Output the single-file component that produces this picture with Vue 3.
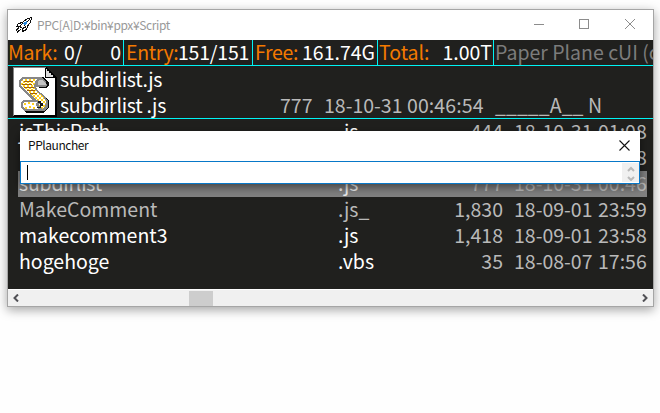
<script setup>
const status = [
  { label: 'Mark:', values: ['0/', '0'], cls: 'mark' },
  { label: 'Entry:', values: ['151/151'], cls: 'entry' },
  { label: 'Free:', values: ['161.74G'], cls: 'free' },
  { label: 'Total:', values: ['1.00T'], cls: 'total' },
]
const files = [
  { name: 'jsThisPath', ext: '.js', size: '444', date: '18-10-31', time: '01:08', cls: 'narrow' },
  { name: '', ext: '', size: '', date: '', time: '00:58', cls: '' },
  { name: 'subdirlist', ext: '.js', size: '777', date: '18-10-31', time: '00:46', cls: 'selected narrow' },
  { name: 'MakeComment', ext: '.js_', size: '1,830', date: '18-09-01', time: '23:59', cls: 'dim' },
  { name: 'makecomment3', ext: '.js', size: '1,418', date: '18-09-01', time: '23:58', cls: '' },
  { name: 'hogehoge', ext: '.vbs', size: '35', date: '18-08-07', time: '17:56', cls: '' },
]
</script>

<template>
  <div class="desktop">
    <main class="window">
      <header class="titlebar">
        <svg class="rocket" width="18" height="18" viewBox="0 0 18 18">
          <path d="M16.5 1.5L11 3.5L7.5 6.5L3.5 7.5L1.5 10.5H5.5L7.5 12.5V15.5L11.5 13.5L12.5 10L15.5 6.5Z" fill="#fff" stroke="#0a0a0a" stroke-width="1" shape-rendering="crispEdges" />
          <path d="M15 3L9 9.5M4 11.5L1 14.5M6 13L2 16.5M7.500 7L5 10.500L7.500 12.500L11.500 10.500" fill="none" stroke="#111" stroke-width="1" shape-rendering="crispEdges" />
          <path d="M9 6h2v-1h1v3h-1v1H9V8H8V7h1z" fill="#2787d8" />
        </svg>
        <span class="caption">PPC[A]D:¥bin¥ppx¥Script</span>
        <svg class="controls" width="102" height="12" viewBox="0 0 102 12" shape-rendering="crispEdges" fill="none" stroke="#8c8c8c">
          <path d="M0 5.5H10" />
          <rect x="45.5" y="0.5" width="9" height="9" />
          <path d="M91 0L101 10M101 0L91 10" shape-rendering="auto" />
        </svg>
      </header>

      <section class="status">
        <div v-for="s in status" :key="s.label" class="cell" :class="s.cls">
          <span class="label">{{ s.label }}</span>
          <span v-for="v in s.values" :key="v" class="value">{{ v }}</span>
        </div>
        <div class="about">Paper Plane cUI (c)</div>
      </section>

      <section class="info">
        <svg class="fileicon" width="44" height="50" viewBox="0 0 44 50" shape-rendering="crispEdges">
          <defs>
            <pattern id="parchment" width="4" height="4" patternUnits="userSpaceOnUse">
              <rect width="4" height="4" fill="#fff" />
              <path d="M0 0h2v2H0zM2 2h2v2H2z" fill="#ffcf1c" />
            </pattern>
          </defs>
          <path d="M0 0H33L44 11V50H0Z" fill="#000" />
          <path d="M1 1H32V11H42V48H1Z" fill="#fff" />
          <path d="M0.5 49V0.5H33" fill="none" stroke="#858585" />
          <path d="M32 1h1v9h9v1H32z" fill="#000" />
          <path d="M33 2h1v2h2v2h2v2h2v2h-7z" fill="#ddd" />
          <!-- shadow side of the scroll -->
          <path d="M28 10h3l5 6v2l-3 3h-7l-2-2h8l-5-5zM11 44h20l4-4v-4l-5-6 2-1 4 5v6l-5 6H13z" fill="#080808" />
          <!-- outline -->
          <path d="M9 10H28L33 15L34 18L32 20H23L25 24L31 28L35 34V40L31 44H11L8 41V35L11 33H19L16 29L10 24L6 19V14Z" fill="#878787" />
          <!-- sheet and lower roll -->
          <path d="M10 12H24L22 15L21 20L24 25L30 29L33 34L32 40L29 42L26 39L27 35L21 31L17 27L12 23L8 19V15Z" fill="url(#parchment)" />
          <path d="M11 35H24L23 38L25 42H12L10 40V36Z" fill="#fff" />
          <path d="M11 36h2v2h-2zM15 35h2v2h-2zM19 36h2v2h-2zM12 40h2v2h-2zM16 39h2v2h-2zM20 40h2v2h-2z" fill="#ffcf1c" />
          <path d="M26 13h3l4 4v1h-8v-3z" fill="#c3c3c3" />
          <path d="M25 34h3v2h2v3h-2v2h-4v-1h3v-4h-2z" fill="#171717" />
          <path d="M11 14.500h9M9 17.500h10M11 20.500h10M14 23.500h8M17 26.500h7" fill="none" stroke="#a0600a" stroke-width="1" />
        </svg>
        <div class="details">
          <div class="line name">subdirlist.js</div>
          <div class="line fields">
            <span class="name">subdirlist .js</span>
            <span class="size num">777</span>
            <span class="date num">18-10-31</span>
            <span class="time num">00:46:54</span>
            <span class="attrs"><span class="under">_____</span>A<span class="under">__</span> N</span>
          </div>
        </div>
      </section>

      <section class="list">
        <div v-for="(f, i) in files" :key="i" class="row" :class="f.cls">
          <span class="fname">{{ f.name }}</span>
          <span class="ext">{{ f.ext }}</span>
          <span class="fsize num">{{ f.size }}</span>
          <span class="fdate num">{{ f.date }}</span>
          <span class="ftime num">{{ f.time }}</span>
        </div>
      </section>

      <footer class="scrollbar">
        <svg width="6" height="8" viewBox="0 0 6 8"><path d="M5 0.5L1.5 4L5 7.5" fill="none" stroke="#505055" stroke-width="2" /></svg>
        <div class="track"><div class="thumb"></div></div>
        <svg width="6" height="8" viewBox="0 0 6 8"><path d="M1 0.5L4.5 4L1 7.5" fill="none" stroke="#505055" stroke-width="2" /></svg>
      </footer>
    </main>

    <div class="launcher">
      <div class="launcher-title">
        <span class="launcher-name">PPlauncher</span>
        <svg width="11" height="11" viewBox="0 0 11 11"><path d="M.5 .5L10.5 10.5M10.5 .5L.5 10.5" stroke="#111" stroke-width="1.1" /></svg>
      </div>
      <div class="entrybox">
        <i class="caret"></i>
        <div class="spin">
          <svg width="8" height="16" viewBox="0 0 8 16" fill="none" stroke="#b9b9b9" stroke-width="2"><path d="M1 6L4 3L7 6M1 12L4 15L7 12" /></svg>
        </div>
      </div>
    </div>
  </div>
</template>

<style>
body { background: #fefefe; overflow: hidden; }
</style>
<style scoped>
* { box-sizing: border-box; }
.desktop { position: relative; width: 660px; height: 413px; padding: 9px 0 0 7px; overflow: hidden; background: #fefefe; font-family: "Noto Sans CJK JP", sans-serif; font-size: 19.5px; color: #fff; white-space: pre; }
.window { width: 647px; height: 298px; border: 1px solid #a5a5a5; background: #20201e; box-shadow: 0 3px 10px rgba(0,0,0,.36); overflow: hidden; }
.titlebar { height: 30px; background: #fff; display: flex; align-items: center; padding: 0 17px 0 7px; }
.caption { margin-left: 4px; color: #999; font-size: 12px; line-height: 28px; letter-spacing: -.37px; }
.controls { margin-left: auto; }
.status { display: flex; height: 26px; border-bottom: 1px solid #00f4f4; line-height: 23px; }
.cell { display: flex; border-right: 1px solid #00f4f4; flex: none; }
.label { color: #f47a00; flex: none; }
.mark { width: 116px; padding: 0 2px 0 0; }
.mark .label { width: 56px; letter-spacing: -.3px; }
.mark .value:last-child { margin-left: auto; }
.entry { width: 129px; padding-left: 2px; }
.entry .label { width: 52px; letter-spacing: -.35px; }
.entry .value { letter-spacing: -.2px; }
.free { width: 125px; padding-left: 2px; }
.free .label { width: 47px; letter-spacing: -.3px; }
.total { width: 116px; padding: 0 1px 0 1px; }
.total .value { margin-left: auto; }
.about { padding-left: 1px; color: #7c7c7c; }
.info { height: 53px; border-bottom: 1px solid #00f4f4; display: flex; padding: 1px 0 0 5px; }
.details { padding-left: 3px; }
.line { height: 26px; line-height: 24px; }
.fields { display: grid; grid-template-columns: 220px 32px 95px 76px auto; color: #b9b9b9; }
.name { color: #fff; letter-spacing: -.27px; }
.size { text-align: right; }
.date { padding-left: 12px; }
.time { letter-spacing: .1px; }
.attrs { padding-left: 12px; letter-spacing: .05px; }
.list { height: 170px; padding: 0 6px 0 10px; }
.row { height: 26px; line-height: 24px; display: grid; grid-template-columns: 319px 85px 80px 95px 49px; padding-left: 1px; }
.num { color: #b9b9b9; }
.fsize { text-align: right; }
.fdate { padding-left: 11px; }
.row.selected { background: #808080; color: #ececec; }
.narrow .fname { letter-spacing: -.2px; }
.dim { color: #b9b9b9; }
.scrollbar { height: 17px; background: #f0f0f0; border-top: 1px solid #fff; display: flex; align-items: center; padding: 0 5px; }
.track { flex: 1; height: 15px; padding-left: 170px; }
.thumb { width: 24px; height: 15px; background: #cdcdcd; }
.launcher { position: absolute; left: 20px; top: 131px; width: 620px; height: 53px; background: #fff; box-shadow: 0 3px 9px rgba(0,0,0,.5); }
.launcher-title { height: 30px; padding: 0 10px 2px 8px; display: flex; justify-content: space-between; align-items: center; color: #111; font-size: 12px; line-height: 28px; }
.launcher-name { letter-spacing: -.45px; }
.entrybox { height: 23px; border: 1px solid #0878c8; display: flex; align-items: center; padding-left: 6px; }
.caret { width: 1px; height: 15px; background: #000; }
.spin { margin-left: auto; width: 17px; height: 19px; background: #f0f0f0; display: flex; justify-content: center; align-items: center; }
</style>
